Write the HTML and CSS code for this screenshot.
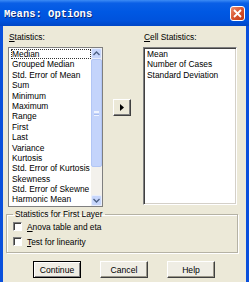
FILE: index.html
```html
<!DOCTYPE html>
<html lang="en">
<head>
  <meta charset="UTF-8" />
  <title>Means: Options</title>
  <link rel="stylesheet" href="styles.css">
</head>
<body>
  <div class="window">
    <div class="titlebar">
      <span class="title">Means: Options</span>
      <span class="close">
        <svg width="9" height="9" viewBox="0 0 9 9"><path d="M1 1 L8 8 M8 1 L1 8" stroke="#fff" stroke-width="1.8" fill="none"/></svg>
      </span>
    </div>

    <div class="frame">
      <div class="lists">
        <div class="col left">
          <div class="label"><u>S</u>tatistics:</div>
          <div class="listbox stats">
            <ul class="items">
              <li class="focus">Median</li>
              <li>Grouped Median</li>
              <li>Std. Error of Mean</li>
              <li>Sum</li>
              <li>Minimum</li>
              <li>Maximum</li>
              <li>Range</li>
              <li>First</li>
              <li>Last</li>
              <li>Variance</li>
              <li>Kurtosis</li>
              <li>Std. Error of Kurtosis</li>
              <li>Skewness</li>
              <li>Std. Error of Skewne</li>
              <li>Harmonic Mean</li>
            </ul>
            <div class="scrollbar">
              <div class="sb-btn">
                <svg width="7" height="5" viewBox="0 0 7 5"><path d="M0.5 4 L3.5 1 L6.5 4" stroke="#4d6185" stroke-width="1.4" fill="none"/></svg>
              </div>
              <div class="sb-thumb"><span class="grip"></span></div>
              <div class="sb-track"></div>
              <div class="sb-btn">
                <svg width="7" height="5" viewBox="0 0 7 5"><path d="M0.5 1 L3.5 4 L6.5 1" stroke="#4d6185" stroke-width="1.4" fill="none"/></svg>
              </div>
            </div>
          </div>
        </div>

        <div class="mid">
          <button class="move">
            <svg width="4" height="7" viewBox="0 0 4 7"><path d="M0 0 L4 3.5 L0 7 Z" fill="#000"/></svg>
          </button>
        </div>

        <div class="col right">
          <div class="label"><u>C</u>ell Statistics:</div>
          <div class="listbox cell">
            <ul class="items">
              <li>Mean</li>
              <li>Number of Cases</li>
              <li>Standard Deviation</li>
            </ul>
          </div>
        </div>
      </div>

      <fieldset class="group">
        <legend>Statistics for First Layer</legend>
        <label class="check"><span class="box"></span><span><u>A</u>nova table and eta</span></label>
        <label class="check"><span class="box"></span><span><u>T</u>est for linearity</span></label>
      </fieldset>

      <div class="buttons">
        <button class="btn default">Continue</button>
        <button class="btn">Cancel</button>
        <button class="btn">Help</button>
      </div>
    </div>
  </div>
</body>
</html>
```

FILE: styles.css
```css
* {
  margin: 0;
  padding: 0;
  box-sizing: border-box;
}
body {
  font-family: "Liberation Sans", Arial, sans-serif;
  font-size: 8.4px;
  color: #000;
  background: #ece9d8;
}
.window {
  width: 249px;
  height: 282px;
  background: #ece9d8;
  overflow: hidden;
}
.titlebar {
  height: 26px;
  display: flex;
  justify-content: space-between;
  align-items: center;
  padding: 1px 4px 0 4px;
  background: linear-gradient(to bottom, #3d8cf5 0%, #0a5fe6 12%, #0058e3 45%, #0052dc 80%, #0046c6 100%);
}
.title {
  font-family: "Liberation Mono", "Courier New", monospace;
  font-weight: bold;
  font-size: 10.5px;
  color: #fff;
  text-shadow: 1px 1px 0 #0a2a7a;
}
.close {
  width: 15px;
  height: 15px;
  display: flex;
  align-items: center;
  justify-content: center;
  border: 1px solid #fff;
  border-radius: 3px;
  background: linear-gradient(135deg, #ec8d6f 0%, #d8542f 50%, #c13a17 100%);
}
.frame {
  height: 256px;
  border-left: 3px solid #0a50dc;
  border-right: 3px solid #0a50dc;
  padding-top: 5px;
}
.lists {
  display: flex;
  padding-left: 5px;
}
.col {
  display: flex;
  flex-direction: column;
}
.left {
  width: 95px;
}
.right {
  width: 94px;
}
.label {
  height: 12px;
  line-height: 12px;
  margin-bottom: 4px;
  padding-left: 1px;
}
.listbox {
  background: #fff;
  border-top: 1px solid #808080;
  border-left: 1px solid #808080;
  border-right: 1px solid #fff;
  border-bottom: 1px solid #fff;
  box-shadow: inset 1px 1px 0 #404040, inset -1px -1px 0 #d4d0c8;
  display: flex;
}
.stats {
  height: 160px;
  border-color: #7f7f7f;
  box-shadow: none;
}
.cell {
  height: 158px;
}
.items {
  list-style: none;
  flex: 1;
  min-width: 0;
  overflow: hidden;
  padding: 1px 0 0 2px;
}
.items li {
  line-height: 10.4px;
  height: 10.4px;
  padding: 0 1px;
  white-space: nowrap;
}
.cell .items {
  padding-left: 2px;
}
.focus {
  outline: 1px dotted #333;
  outline-offset: -1px;
}
.scrollbar {
  width: 11px;
  display: flex;
  flex-direction: column;
  background: #f3f1ec;
}
.sb-btn {
  height: 11px;
  display: flex;
  align-items: center;
  justify-content: center;
  background: #c7d6fb;
  border: 1px solid #e8eefc;
  border-radius: 2px;
}
.sb-thumb {
  height: 108px;
  background: #c4d4fb;
  border: 1px solid #b2c6f5;
  border-radius: 2px;
  display: flex;
  align-items: center;
  justify-content: center;
}
.grip {
  width: 5px;
  height: 5px;
  border-top: 1px solid #eef3fe;
  border-bottom: 1px solid #eef3fe;
  box-shadow: inset 0 1px 0 #eef3fe, inset 0 -1px 0 #a9bdf0;
}
.sb-track {
  flex: 1;
}
.mid {
  width: 40px;
  padding: 68px 0 0 10px;
}
.move {
  width: 18px;
  height: 17px;
  display: flex;
  align-items: center;
  justify-content: center;
  background: #ece9d8;
  border-top: 1px solid #fff;
  border-left: 1px solid #fff;
  border-right: 1px solid #404040;
  border-bottom: 1px solid #404040;
  box-shadow: inset -1px -1px 0 #808080;
}
.group {
  margin: 2px 8px 0 3px;
  padding: 0 6px 3px 6px;
  border: 1px solid #b5b2a4;
  box-shadow: 1px 1px 0 #fff, inset 1px 1px 0 #fff;
}
.group legend {
  padding: 0 2px;
  line-height: 10px;
}
.check {
  display: flex;
  align-items: center;
  gap: 5px;
  height: 15px;
}
.box {
  width: 9px;
  height: 9px;
  background: #fff;
  border-top: 1px solid #808080;
  border-left: 1px solid #808080;
  border-right: 1px solid #fff;
  border-bottom: 1px solid #fff;
  box-shadow: inset 1px 1px 0 #404040;
}
.buttons {
  display: flex;
  gap: 19px;
  padding-left: 30px;
  margin-top: 8px;
}
.btn {
  width: 48px;
  height: 17px;
  font-family: "Liberation Sans", Arial, sans-serif;
  font-size: 8.6px;
  color: #000;
  background: #efede4;
  border-top: 1px solid #fff;
  border-left: 1px solid #fff;
  border-right: 1px solid #404040;
  border-bottom: 1px solid #404040;
  box-shadow: inset -1px -1px 0 #9a978a;
}
.btn.default {
  border: 1px solid #000;
  box-shadow: inset 1px 1px 0 #fff, inset -1px -1px 0 #808080;
}
```
